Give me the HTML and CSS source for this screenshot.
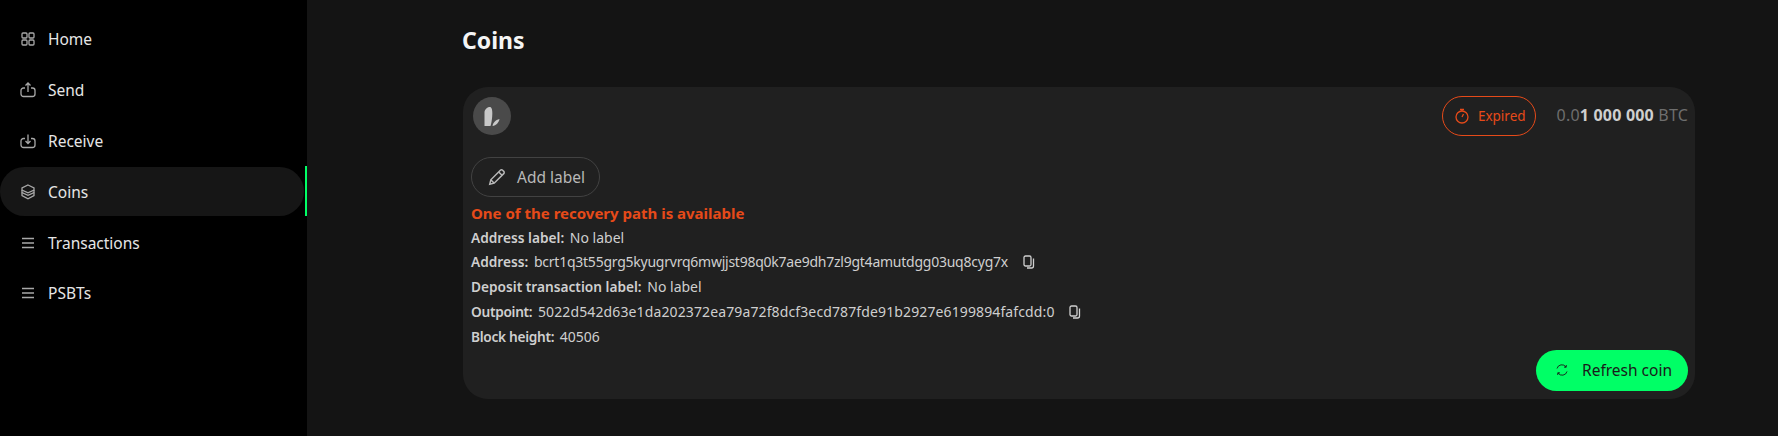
FILE: index.html
```html
<!DOCTYPE html>
<html lang="en">

<head>
    <meta charset="utf-8">
    <meta name="viewport" content="width=device-width, initial-scale=1.0">
    <title>Coins</title>
    <link rel="stylesheet" href="styles.css">
</head>

<body>

    <aside class="sidebar">
        <nav class="menu">
            <a class="menu-item">
                <svg class="menu-icon" viewBox="0 0 16 16"><rect x="2" y="2" width="5" height="5" rx="1"/><rect x="9" y="2" width="5" height="5" rx="1"/><rect x="2" y="9" width="5" height="5" rx="1"/><rect x="9" y="9" width="5" height="5" rx="1"/></svg>
                Home
            </a>
            <a class="menu-item">
                <svg class="menu-icon" viewBox="0 0 16 16"><path d="M5 6H3.500A2.500 2.500 0 0 0 1 8.500v3.500a2.500 2.500 0 0 0 2.500 2.500h9A2.500 2.500 0 0 0 15 12V8.500A2.500 2.500 0 0 0 12.500 6H11"/><path d="M8 10V1M5.500 3.500 8 1l2.500 2.500"/></svg>
                Send
            </a>
            <a class="menu-item">
                <svg class="menu-icon" viewBox="0 0 16 16"><path d="M5 5.500H3.500A2.500 2.500 0 0 0 1 8v4a2.500 2.500 0 0 0 2.500 2.500h9A2.500 2.500 0 0 0 15 12V8a2.500 2.500 0 0 0-2.500-2.500H11"/><path d="M8 1.500V10.500M5.500 8 8 10.500 10.500 8"/></svg>
                Receive
            </a>
            <a class="menu-item active">
                <svg class="menu-icon" viewBox="0 0 16 16"><path d="M8 1 14 3.800V6L8 8.800 2 6V3.800Z"/><path d="M2 6V8.500L8 11.300 14 8.500V6"/><path d="M2 8.500V11.500L8 14.800 14 11.500V8.500"/></svg>
                Coins
            </a>
            <a class="menu-item">
                <svg class="menu-icon" viewBox="0 0 16 16"><path d="M2 3.500H14M2 8H14M2 12.500H14"/></svg>
                Transactions
            </a>
            <a class="menu-item">
                <svg class="menu-icon" viewBox="0 0 16 16"><path d="M2 3.500H14M2 8H14M2 12.500H14"/></svg>
                PSBTs
            </a>
        </nav>
    </aside>

    <main class="content">
        <h1>Coins</h1>

        <section class="coin">
            <div class="coin-head">
                <div class="coin-logo">
                    <svg viewBox="0 0 20 20"><path d="M2.500 6C3 2.500 7 0 9 1.500c1.500 1.500 1.500 6 1.200 9-.3 3.500-.8 7-1.700 9.500H2.500Z"/><path d="M10.500 20c.3-3 3-6 7-7-.5 3.500-3.500 6.500-7 7Z"/></svg>
                </div>
                <div class="coin-status">
                    <span class="expired">
                        <svg viewBox="0 0 16 16"><circle cx="8" cy="9" r="6"/><path d="M6 1.500h4M8 1.500V3M8 9l1.500-3"/></svg>
                        Expired
                    </span>
                    <span class="amount">0.0<b>1 000 000</b> BTC</span>
                </div>
            </div>

            <button class="add-label">
                <svg viewBox="0 0 16 16"><path d="M1.500 14.500 2.500 10.500 11 2a1.400 1.400 0 0 1 2 0l1 1a1.400 1.400 0 0 1 0 2l-8.500 8.500Z"/><path d="M9.500 3.500l3 3M2.500 10.500l3 3"/></svg>
                Add label
            </button>

            <p class="warning">One of the recovery path is available</p>

            <div class="row"><b>Address label:</b> No label</div>
            <div class="row"><b>Address:</b> <span class="address">bcrt1q3t55grg5kyugrvrq6mwjjst98q0k7ae9dh7zl9gt4amutdgg03uq8cyg7x</span>
                <svg class="copy" viewBox="0 0 12 14"><rect x="1" y="1" width="7" height="10" rx="1.500"/><path d="M10.500 3.500V11a2 2 0 0 1-2 2H4"/></svg>
            </div>
            <div class="row"><b>Deposit transaction label:</b> No label</div>
            <div class="row"><b class="tight">Outpoint:</b> <span class="outpoint">5022d542d63e1da202372ea79a72f8dcf3ecd787fde91b2927e6199894fafcdd:0</span>
                <svg class="copy" viewBox="0 0 12 14"><rect x="1" y="1" width="7" height="10" rx="1.500"/><path d="M10.500 3.500V11a2 2 0 0 1-2 2H4"/></svg>
            </div>
            <div class="row"><b class="tight">Block height:</b> 40506</div>

            <div class="coin-actions">
                <button class="refresh">
                    <svg viewBox="0 0 16 16"><path d="M3 6.500A5 5 0 0 1 12 5M13 9.500A5 5 0 0 1 4 11"/><path d="M12.300 3 12.200 5.300 10 5.100M3.700 13 3.800 10.700 6 10.900"/></svg>
                    Refresh coin
                </button>
            </div>
        </section>
    </main>

</body>

</html>
```

FILE: styles.css
```css
* {
    box-sizing: border-box;
}

body {
    display: flex;
    margin: 0;
    height: 436px;
    overflow: hidden;
    background: #141414;
    color: #e6e6e6;
    font-family: "Noto Sans", sans-serif;
}

svg {
    fill: none;
    stroke: currentColor;
    stroke-width: 1.300;
}

.sidebar {
    width: 307px;
    flex-shrink: 0;
    background: #000;
}

.menu {
    display: flex;
    flex-direction: column;
    padding-top: 14px;
}

.menu-item {
    display: flex;
    align-items: center;
    gap: 12px;
    height: 50.800px;
    padding-left: 20px;
    font-size: 15.500px;
    color: #e6e6e6;
    cursor: pointer;
}

.menu-icon {
    width: 16px;
    height: 16px;
    color: #a8a8a8;
}

.active {
    position: relative;
    width: 304px;
    height: 49px;
    margin: 1px 0 .800px;
    background: #161616;
    border-radius: 25px;
}

.active::after {
    content: "";
    position: absolute;
    top: -1px;
    right: -3px;
    width: 2px;
    height: 50px;
    background: #00ff66;
}

.content {
    flex: 1;
    padding: 24px 83px 0 155px;
}

h1 {
    margin: 0 0 30px;
    height: 33px;
    font-size: 23px;
    line-height: 33px;
    font-weight: 700;
    color: #f5f5f5;
}

.coin {
    height: 312px;
    margin-left: 1px;
    padding: 9px 7px 8px 8px;
    background: #202020;
    border-radius: 25px;
}

.coin-head {
    display: flex;
    justify-content: space-between;
    align-items: flex-start;
    height: 61px;
}

.coin-logo {
    display: flex;
    align-items: center;
    justify-content: center;
    width: 38px;
    height: 38px;
    margin: 1px 0 0 2px;
    background: #4a4a4a;
    border-radius: 50%;
}

.coin-logo svg {
    width: 20px;
    height: 20px;
    fill: #c8c8c8;
    stroke: none;
}

.coin-status {
    display: flex;
    align-items: center;
    gap: 21px;
}

.expired {
    display: flex;
    align-items: center;
    gap: 8px;
    height: 40px;
    padding: 0 9px 0 11px;
    border: 1px solid #e64a19;
    border-radius: 21px;
    font-size: 13.500px;
    color: #e64a19;
}

.expired svg {
    width: 16px;
    height: 16px;
}

.amount {
    margin-top: -2px;
    font-size: 16px;
    letter-spacing: .2px;
    color: #6e6e6e;
}

.amount b {
    color: #cfcfcf;
}

.add-label {
    display: flex;
    align-items: center;
    gap: 11px;
    height: 40px;
    padding: 0 14px 0 16px;
    background: transparent;
    border: 1px solid #424242;
    border-radius: 21px;
    font-family: inherit;
    font-size: 15.500px;
    color: #b8b8b8;
}

.add-label svg {
    width: 18px;
    height: 18px;
}

.warning {
    margin: 5px 0 1.500px;
    font-size: 15px;
    line-height: 22px;
    font-weight: 700;
    color: #e64a19;
}

.row {
    height: 24.750px;
    font-size: 14px;
    line-height: 24.750px;
    color: #cfcfcf;
}

.row b {
    margin-right: 2px;
    font-size: 13.700px;
    font-weight: 600;
}

.row .tight {
    letter-spacing: -.3px;
}

.address {
    letter-spacing: -.24px;
}

.outpoint {
    letter-spacing: .12px;
}

.copy {
    width: 12px;
    height: 14px;
    margin-left: 11px;
    vertical-align: -2px;
}

.coin-actions {
    display: flex;
    justify-content: flex-end;
    margin-top: .500px;
}

.refresh {
    display: flex;
    align-items: center;
    gap: 12px;
    height: 41px;
    padding: 0 16px 0 18px;
    background: #00ff66;
    border: none;
    border-radius: 21px;
    font-family: inherit;
    font-size: 15.500px;
    color: #1a1a1a;
}

.refresh svg {
    width: 16px;
    height: 16px;
    stroke-width: .9;
}
```
